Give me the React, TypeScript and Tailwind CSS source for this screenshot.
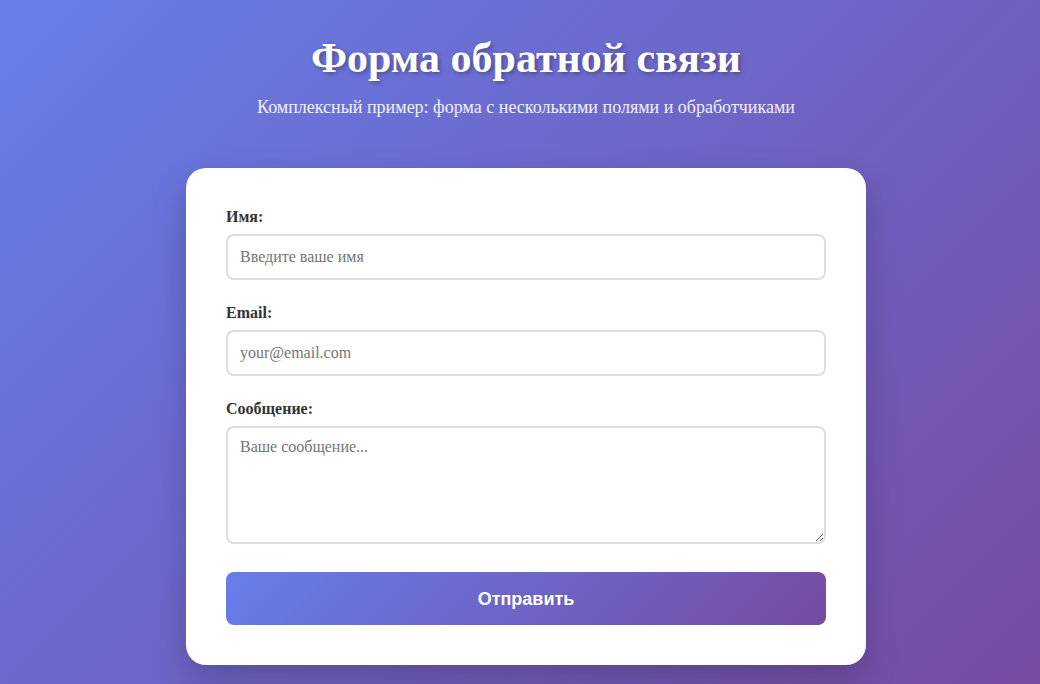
import React, { useState } from 'react';

export default function App() {
  const [name, setName] = useState('');
  const [email, setEmail] = useState('');
  const [message, setMessage] = useState('');

  const handleSubmit = (e: React.FormEvent) => {
    e.preventDefault();
  };

  return (
    <div className="min-h-screen bg-[linear-gradient(135deg,#667eea_0%,#764ba2_100%)] pl-3 pt-[34px] pb-5 font-['Liberation_Serif','Times_New_Roman',serif]">
      <div className="mx-auto w-[680px]">
        <h1 className="mb-[15px] text-center text-[42px] leading-[48px] font-bold text-white [text-shadow:2px_2px_4px_rgba(0,0,0,0.3)]">
          Форма обратной связи
        </h1>
        <p className="mb-[51px] text-center text-lg leading-5 text-white/90">
          Комплексный пример: форма с несколькими полями и обработчиками
        </p>

        <form
          onSubmit={handleSubmit}
          className="rounded-[20px] bg-white p-10 shadow-[0_15px_35px_rgba(0,0,0,0.2)]"
        >
          <div className="mb-6">
            <label htmlFor="name" className="mb-2 block text-base leading-[18px] font-bold text-[#333]">
              Имя:
            </label>
            <input
              id="name"
              type="text"
              value={name}
              onChange={(e) => setName(e.target.value)}
              placeholder="Введите ваше имя"
              className="block h-[46px] w-full rounded-lg border-2 border-[#ddd] px-3 text-base text-[#333] placeholder-[#757575] outline-none focus:border-[#667eea]"
            />
          </div>

          <div className="mb-6">
            <label htmlFor="email" className="mb-2 block text-base leading-[18px] font-bold text-[#333]">
              Email:
            </label>
            <input
              id="email"
              type="email"
              value={email}
              onChange={(e) => setEmail(e.target.value)}
              placeholder="your@email.com"
              className="block h-[46px] w-full rounded-lg border-2 border-[#ddd] px-3 text-base text-[#333] placeholder-[#757575] outline-none focus:border-[#667eea]"
            />
          </div>

          <div className="mb-7">
            <label htmlFor="message" className="mb-2 block text-base leading-[18px] font-bold text-[#333]">
              Сообщение:
            </label>
            <textarea
              id="message"
              value={message}
              onChange={(e) => setMessage(e.target.value)}
              placeholder="Ваше сообщение..."
              className="block h-[118px] w-full resize-y rounded-lg border-2 border-[#ddd] px-3 py-[10px] text-base leading-[18px] text-[#333] placeholder-[#757575] outline-none focus:border-[#667eea]"
            />
          </div>

          <button
            type="submit"
            className="block h-[53px] w-full rounded-lg bg-[linear-gradient(135deg,#667eea_0%,#764ba2_100%)] font-['Liberation_Sans',Arial,sans-serif] text-lg font-bold text-white"
          >
            Отправить
          </button>
        </form>
      </div>
    </div>
  );
}
